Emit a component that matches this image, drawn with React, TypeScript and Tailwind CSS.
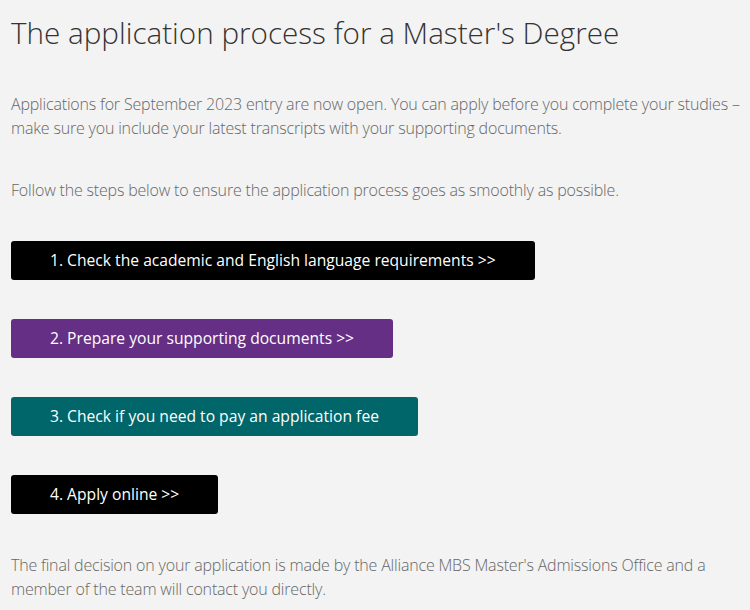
const STEPS = [
  { label: "1. Check the academic and English language requirements >>", className: "bg-black" },
  { label: "2. Prepare your supporting documents >>", className: "bg-[#652f85]" },
  { label: "3. Check if you need to pay an application fee", className: "bg-[#00666a]" },
  { label: "4. Apply online >>", className: "bg-black" },
];

export default function App() {
  return (
    <div className="min-h-[610px] w-[750px] bg-[#f3f3f3] pl-[11px] pr-[6px] pt-[13px] font-['Open_Sans',sans-serif] text-[#666]">
      <h1 className="text-[29.65px] font-light leading-[40px] text-[#333]">
        The application process for a Master's Degree
      </h1>
      <p className="mt-[39px] text-[16px] font-light leading-[24px] tracking-[-0.18px]">
        Applications for September 2023 entry are now open. You can apply before you complete your studies – make
        sure you include your latest transcripts with your supporting documents.
      </p>
      <p className="mt-[38px] text-[16px] font-light leading-[24px] tracking-[-0.18px]">
        Follow the steps below to ensure the application process goes as smoothly as possible.
      </p>
      <div className="mt-[39px] flex flex-col items-start gap-[39px]">
        {STEPS.map((step) => (
          <a
            key={step.label}
            href="#"
            className={`flex h-[39px] items-center rounded-[3px] px-[39px] text-[15.65px] text-white ${step.className}`}
          >
            {step.label}
          </a>
        ))}
      </div>
      <p className="mt-[39px] text-[16px] font-light leading-[24px] tracking-[-0.18px]">
        The final decision on your application is made by the Alliance MBS Master's Admissions Office and a member
        of the team will contact you directly.
      </p>
    </div>
  );
}
